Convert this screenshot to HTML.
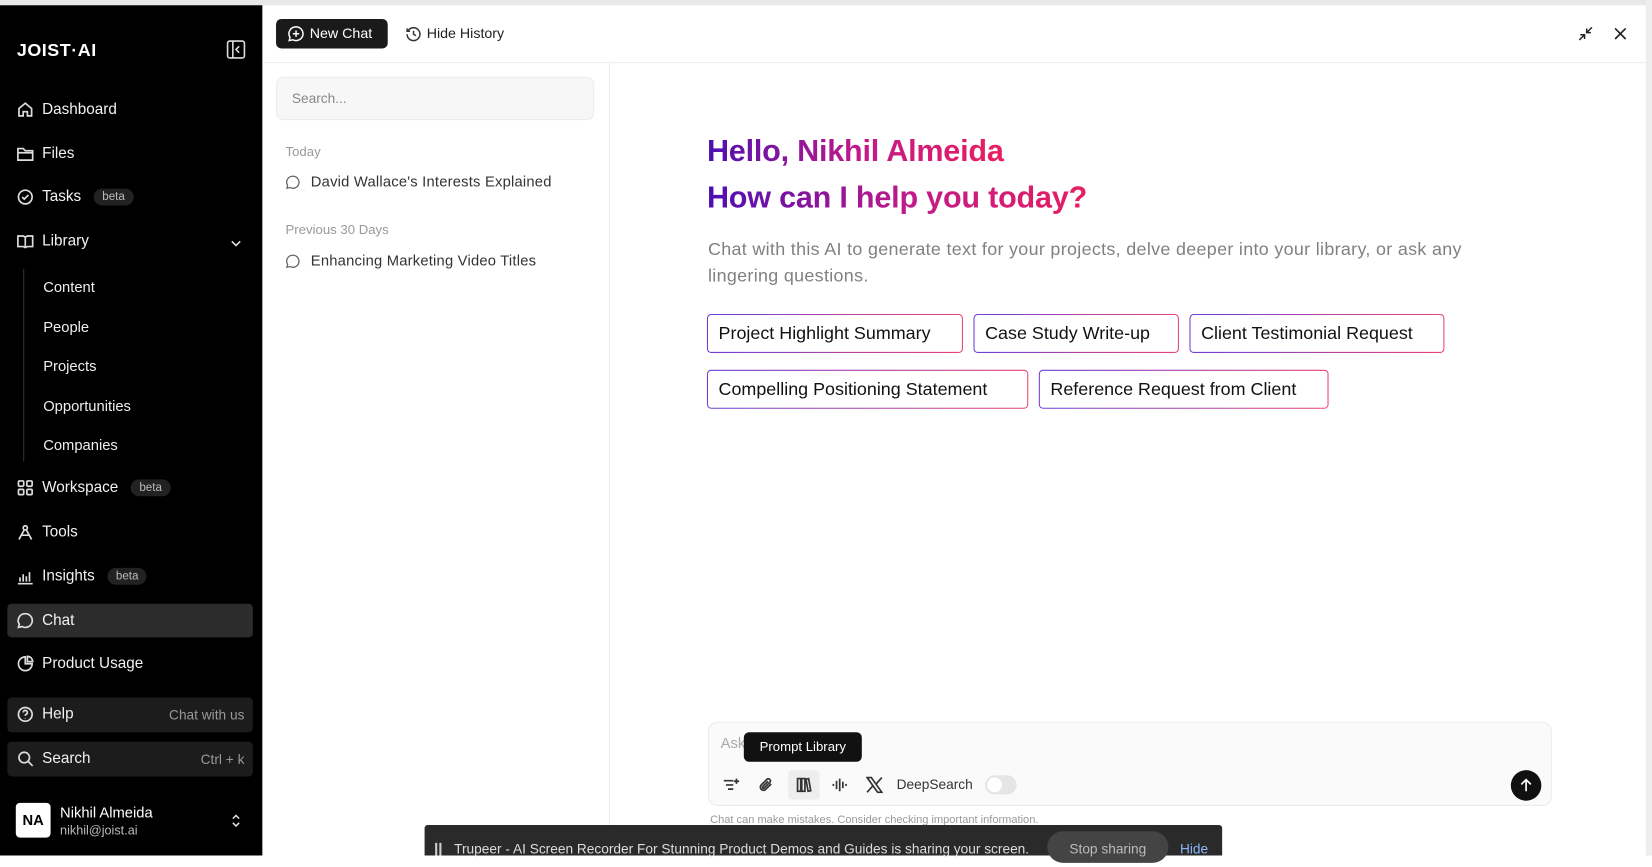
<!DOCTYPE html>
<html><head><meta charset="utf-8"><style>
*{box-sizing:border-box;margin:0;padding:0}
html,body{width:1652px;height:856px;overflow:hidden;background:#fff;font-family:"Liberation Sans",sans-serif}
#w{position:absolute;left:0;top:0;width:1568px;height:812px;transform:scale(1.05357);transform-origin:0 0;background:#fff}
.a{position:absolute;white-space:nowrap}
.sb{position:absolute;left:0;top:5px;width:249px;height:807px;background:#000;color:#fff}
.nav{position:absolute;left:16px;font-size:14.5px;color:#f2f2f2;display:flex;align-items:center;gap:8px}
.nav svg{width:16px;height:16px;stroke:#ddd;fill:none;stroke-width:1.6}
.sub{position:absolute;left:41px;font-size:14px;color:#eee}
.beta{background:#222;color:#bbb;font-size:11px;border-radius:9px;padding:2px 8px;margin-left:4px}
.chip{position:absolute;height:37px;border-radius:4px;padding:1px;background:linear-gradient(90deg,#6d3fd6,#e8437a)}
.chip span{display:block;height:100%;background:#fff;border-radius:3px;font-size:17px;color:#111;line-height:35px;padding:0 10px}
.grad{background:linear-gradient(90deg,#4c0fb0,#c21a8a 50%,#ec1f5a);-webkit-background-clip:text;background-clip:text;color:transparent}
.ic{position:absolute;stroke:#333;fill:none;stroke-width:1.6}
</style></head><body><div id="w">
<div class="a" style="left:0;top:0;width:1568px;height:5px;background:#e8e8e8"></div>
<div class="a" style="left:1562px;top:0;width:6px;height:812px;background:#eee"></div>
<div class="sb">
 <div class="a" style="left:16px;top:33px;font-size:17px;font-weight:bold;letter-spacing:0.5px">JOIST·AI</div>
 <svg class="a" style="left:215px;top:33px" width="18" height="18" viewBox="0 0 18 18" fill="none" stroke="#ddd" stroke-width="1.5"><rect x="1" y="1" width="16" height="16" rx="2"/><path d="M6 1v16M12 6l-3 3 3 3"/></svg>
 <div class="nav" style="top:91px"><svg viewBox="0 0 16 16"><path d="M2 7l6-5 6 5v7H10v-4H6v4H2z"/></svg>Dashboard</div>
 <div class="nav" style="top:133px"><svg viewBox="0 0 16 16"><path d="M1 3h5l2 2h7v9H1z M1 7h14"/></svg>Files</div>
 <div class="nav" style="top:174px"><svg viewBox="0 0 16 16"><circle cx="8" cy="8" r="6.5"/><path d="M5 8l2 2 4-4"/></svg>Tasks<span class="beta">beta</span></div>
 <div class="nav" style="top:216px"><svg viewBox="0 0 16 16"><path d="M1 3h5l2 1 2-1h5v10h-5l-2 1-2-1H1z M8 4v10"/></svg>Library</div>
 <svg class="a" style="left:218px;top:220px" width="12" height="12" viewBox="0 0 12 12" fill="none" stroke="#ddd" stroke-width="1.5"><path d="M2 4l4 4 4-4"/></svg>
 <div class="a" style="left:22px;top:250px;width:1px;height:183px;background:#333"></div>
 <div class="sub" style="top:259px">Content</div>
 <div class="sub" style="top:297px">People</div>
 <div class="sub" style="top:334px">Projects</div>
 <div class="sub" style="top:372px">Opportunities</div>
 <div class="sub" style="top:409px">Companies</div>
 <div class="nav" style="top:450px"><svg viewBox="0 0 16 16"><rect x="1.5" y="1.5" width="5" height="5" rx="1"/><rect x="9.5" y="1.5" width="5" height="5" rx="1"/><rect x="1.5" y="9.5" width="5" height="5" rx="1"/><rect x="9.5" y="9.5" width="5" height="5" rx="1"/></svg>Workspace<span class="beta">beta</span></div>
 <div class="nav" style="top:492px"><svg viewBox="0 0 16 16"><circle cx="8" cy="4" r="2"/><path d="M7 6l-5 9M9 6l5 9M4 11h8"/></svg>Tools</div>
 <div class="nav" style="top:534px"><svg viewBox="0 0 16 16"><path d="M1 15h14M3 13V9M6 13V6M9 13V8M12 13V4"/></svg>Insights<span class="beta">beta</span></div>
 <div class="a" style="left:7px;top:568px;width:233px;height:32px;background:#2c2c2c;border-radius:4px"></div>
 <div class="nav" style="top:576px"><svg viewBox="0 0 16 16"><path d="M8 1.5a6.5 6.5 0 1 1-3 12.2L1.5 14.5l.8-3A6.5 6.5 0 0 1 8 1.5z"/></svg>Chat</div>
 <div class="nav" style="top:617px"><svg viewBox="0 0 16 16"><path d="M8 1.5A6.5 6.5 0 1 0 14.5 8H8z M10 1v5h5A5 5 0 0 0 10 1z"/></svg>Product Usage</div>
 <div class="a" style="left:7px;top:657px;width:233px;height:33px;background:#1c1c1c;border-radius:4px"></div>
 <div class="nav" style="top:665px"><svg viewBox="0 0 16 16"><circle cx="8" cy="8" r="6.5"/><path d="M6 6.2a2 2 0 1 1 2.5 2c-.5.2-.5.6-.5 1.3M8 11.5v.5"/></svg>Help</div>
 <div class="a" style="right:17px;top:666px;font-size:13px;color:#999">Chat with us</div>
 <div class="a" style="left:7px;top:699px;width:233px;height:33px;background:#1c1c1c;border-radius:4px"></div>
 <div class="nav" style="top:707px"><svg viewBox="0 0 16 16"><circle cx="7" cy="7" r="5"/><path d="M11 11l4 4"/></svg>Search</div>
 <div class="a" style="right:17px;top:708px;font-size:13px;color:#999">Ctrl + k</div>
 <div class="a" style="left:15px;top:757px;width:33px;height:33px;background:#fff;border-radius:4px;color:#000;font-size:14px;font-weight:bold;text-align:center;line-height:33px">NA</div>
 <div class="a" style="left:57px;top:758px;font-size:14px;color:#fff">Nikhil Almeida</div>
 <div class="a" style="left:57px;top:776px;font-size:12px;color:#bbb">nikhil@joist.ai</div>
 <svg class="a" style="left:218px;top:766px" width="12" height="16" viewBox="0 0 12 16" fill="none" stroke="#ddd" stroke-width="1.5"><path d="M3 6l3-3 3 3M3 10l3 3 3-3"/></svg>
</div>
<div class="a" style="left:249px;top:59px;width:1313px;height:1px;background:#eee"></div>
<div class="a" style="left:262px;top:18px;width:106px;height:28px;background:#1a1a1a;border-radius:5px;color:#fff;font-size:13.5px;line-height:28px;padding-left:32px">New Chat</div>
<svg class="a" style="left:273px;top:24px" width="16" height="16" viewBox="0 0 16 16" fill="none" stroke="#fff" stroke-width="1.4"><path d="M8 1.5a6.5 6.5 0 1 1-3 12.2L1.5 14.5l.8-3A6.5 6.5 0 0 1 8 1.5zM8 5v6M5 8h6"/></svg>
<svg class="a" style="left:385px;top:25px" width="15" height="15" viewBox="0 0 16 16" fill="none" stroke="#333" stroke-width="1.5"><path d="M2.5 4.5A6.5 6.5 0 1 1 1.5 8M1.5 2v3h3M8 4.5V8l2.5 1.5"/></svg>
<div class="a" style="left:405px;top:24px;font-size:13.5px;color:#222">Hide History</div>
<svg class="a" style="left:1498px;top:25px" width="14" height="14" viewBox="0 0 14 14" fill="none" stroke="#222" stroke-width="1.4"><path d="M1 13l5-5M2 8h4v4M13 1L8 6M8 2v4h4"/></svg>
<svg class="a" style="left:1532px;top:26px" width="12" height="12" viewBox="0 0 12 12" fill="none" stroke="#222" stroke-width="1.6"><path d="M1 1l10 10M11 1L1 11"/></svg>
<div class="a" style="left:578px;top:60px;width:1px;height:752px;background:#eee"></div>
<div class="a" style="left:262px;top:73px;width:302px;height:41px;background:#f7f7f7;border:1px solid #ececec;border-radius:7px;font-size:13px;color:#888;line-height:39px;padding-left:14px">Search...</div>
<div class="a" style="left:271px;top:137px;font-size:12.5px;color:#999">Today</div>
<svg class="a" style="left:271px;top:166px" width="14" height="14" viewBox="0 0 16 16" fill="none" stroke="#666" stroke-width="1.4"><path d="M8 1.5a6.5 6.5 0 1 1-3 12.2L1.5 14.5l.8-3A6.5 6.5 0 0 1 8 1.5z"/><path d="M5 8h.1M8 8h.1M11 8h.1" stroke-width="2"/></svg>
<div class="a" style="left:295px;top:164px;font-size:14px;color:#333;letter-spacing:0.2px">David Wallace's Interests Explained</div>
<div class="a" style="left:271px;top:211px;font-size:12.5px;color:#999">Previous 30 Days</div>
<svg class="a" style="left:271px;top:241px" width="14" height="14" viewBox="0 0 16 16" fill="none" stroke="#666" stroke-width="1.4"><path d="M8 1.5a6.5 6.5 0 1 1-3 12.2L1.5 14.5l.8-3A6.5 6.5 0 0 1 8 1.5z"/><path d="M5 8h.1M8 8h.1M11 8h.1" stroke-width="2"/></svg>
<div class="a" style="left:295px;top:239px;font-size:14px;color:#333;letter-spacing:0.2px">Enhancing Marketing Video Titles</div>
<div class="a grad" style="left:671px;top:128px;font-size:29px;font-weight:bold;letter-spacing:-0.2px;width:292px">Hello, Nikhil Almeida</div>
<div class="a grad" style="left:671px;top:172px;font-size:29px;font-weight:bold;letter-spacing:-0.2px;width:386px">How can I help you today?</div>
<div class="a" style="left:672px;top:224px;font-size:17px;color:#808080;line-height:25px;white-space:normal;width:740px;letter-spacing:0.3px">Chat with this AI to generate text for your projects, delve deeper into your library, or ask any lingering questions.</div>
<div class="chip" style="left:671px;top:298px;width:243px"><span>Project Highlight Summary</span></div>
<div class="chip" style="left:924px;top:298px;width:195px"><span>Case Study Write-up</span></div>
<div class="chip" style="left:1129px;top:298px;width:242px"><span>Client Testimonial Request</span></div>
<div class="chip" style="left:671px;top:351px;width:305px"><span>Compelling Positioning Statement</span></div>
<div class="chip" style="left:986px;top:351px;width:275px"><span>Reference Request from Client</span></div>
<div class="a" style="left:672px;top:685px;width:801px;height:80px;background:#fafafa;border:1px solid #ececec;border-radius:9px"></div>
<div class="a" style="left:684px;top:697px;font-size:14px;color:#aaa">Ask</div>
<div class="a" style="left:706px;top:695px;width:112px;height:28px;background:#111;border-radius:5px;color:#fff;font-size:12.5px;line-height:28px;text-align:center">Prompt Library</div>
<svg class="ic" style="left:686px;top:737px" width="16" height="16" viewBox="0 0 16 16"><path d="M1 4h9M3 8h7M5 12h5M13 2v5M10.5 4.5h5"/></svg>
<svg class="ic" style="left:719px;top:737px" width="16" height="16" viewBox="0 0 16 16"><path d="M13 7l-5.5 5.5a3 3 0 0 1-4.2-4.2L9 2.6a2 2 0 0 1 2.8 2.8L6.3 11a1 1 0 0 1-1.4-1.4L10 4.5"/></svg>
<div class="a" style="left:748px;top:731px;width:30px;height:28px;background:#eee;border-radius:4px"></div>
<svg class="ic" style="left:755px;top:737px" width="16" height="16" viewBox="0 0 16 16"><path d="M2 2h3v12H2zM6 2h3v12H6zM10 2.5l2.5-.5 2 11.5-2.5.5z"/></svg>
<svg class="ic" style="left:789px;top:737px" width="16" height="16" viewBox="0 0 16 16"><path d="M2 7v2M5 4v8M8 2v12M11 5v6M14 7v2"/></svg>
<svg class="ic" style="left:822px;top:737px" width="16" height="16" viewBox="0 0 16 16"><path d="M1 1h4l10 14h-4zM15 1L9.5 7.2M1 15l5.5-6.2"/></svg>
<div class="a" style="left:851px;top:737px;font-size:13px;color:#333">DeepSearch</div>
<div class="a" style="left:935px;top:736px;width:30px;height:18px;background:#e5e5e5;border-radius:9px"><div style="position:absolute;left:2px;top:2px;width:14px;height:14px;background:#fff;border-radius:7px"></div></div>
<div class="a" style="left:1434px;top:731px;width:29px;height:29px;background:#111;border-radius:50%"></div>
<svg class="a" style="left:1441px;top:738px" width="15" height="15" viewBox="0 0 15 15" fill="none" stroke="#fff" stroke-width="1.6"><path d="M7.5 13V2M3 6.5l4.5-4.5 4.5 4.5"/></svg>
<div class="a" style="left:674px;top:772px;font-size:10.5px;color:#999">Chat can make mistakes. Consider checking important information.</div>
<div class="a" style="left:403px;top:783px;width:757px;height:29px;background:#2a2a2a;border-radius:3px 3px 0 0"></div>
<div class="a" style="left:413px;top:800px;width:2px;height:12px;background:#ccc"></div>
<div class="a" style="left:417px;top:800px;width:2px;height:12px;background:#ccc"></div>
<div class="a" style="left:431px;top:798px;font-size:13px;color:#ddd">Trupeer - AI Screen Recorder For Stunning Product Demos and Guides is sharing your screen.</div>
<div class="a" style="left:994px;top:789px;width:115px;height:30px;background:#444;border-radius:15px;color:#bbb;font-size:13px;text-align:center;line-height:34px">Stop sharing</div>
<div class="a" style="left:1120px;top:798px;font-size:13px;color:#8ab4f8">Hide</div>
</div></body></html>
